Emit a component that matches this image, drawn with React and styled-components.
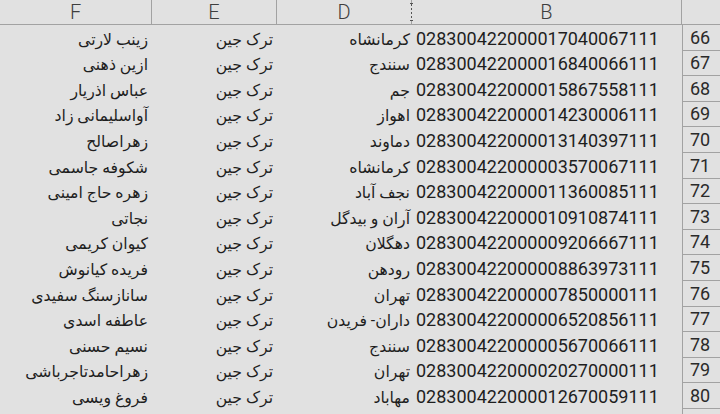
import React from 'react';
import styled, { createGlobalStyle } from 'styled-components';

const GlobalStyle = createGlobalStyle`
  html, body {
    margin: 0;
    padding: 0;
    background: #e1e1e1;
  }
  body {
    width: 720px;
    height: 414px;
    overflow: hidden;
    font-family: 'Roboto', 'DejaVu Sans', sans-serif;
  }
`

const Sheet = styled.div`
  width: 720px;
  height: 414px;
  overflow: hidden;
  background: #e1e1e1;
`
const Grid = styled.div`
  display: grid;
  grid-template-columns: 152px 125px 135px 270px 38px;
`
const HeadCell = styled.div`
  position: relative;
  height: 24px;
  border-bottom: 1px solid #a2a2a2;
  border-right: ${p => (p.$last ? 'none' : '1px solid #a2a2a2')};
  display: flex;
  align-items: center;
  justify-content: center;
  color: #3e3e3e;
  font-size: 20px;
  font-weight: 300;
  box-sizing: content-box;
`
const ResizeMark = styled.span`
  position: absolute;
  right: -2px;
  top: 3px;
  bottom: 3px;
  width: 3px;
  border-top: 1px solid #555;
  border-bottom: 1px solid #555;
  background: repeating-linear-gradient(to bottom, #555 0 2px, transparent 2px 4px) center / 1px 100% no-repeat;
  background-color: #e1e1e1;
`
const Cell = styled.div`
  height: 25.6px;
  box-sizing: border-box;
  display: flex;
  align-items: flex-end;
  justify-content: flex-start;
  padding: 0 ${p => p.$pad || 4}px 2px;
  direction: ${p => (p.$rtl ? 'rtl' : 'ltr')};
  color: #1e1e1e;
  font-size: ${p => (p.$rtl ? '15.7px' : '18px')};
  white-space: nowrap;
  overflow: hidden;
`
const RowNum = styled.div`
  height: 25.6px;
  box-sizing: border-box;
  border-left: 1px solid #a2a2a2;
  border-bottom: 1px solid #a2a2a2;
  display: flex;
  align-items: flex-end;
  padding: 0 0 2px 7px;
  color: #2a2a2a;
  font-size: 18px;
`

const rows = [
  [66, 'زینب لارتی', 'کرمانشاه', '028300422000017040067111'],
  [67, 'ازین ذهنی', 'سنندج', '028300422000016840066111'],
  [68, 'عباس اذریار', 'جم', '028300422000015867558111'],
  [69, 'آواسلیمانی زاد', 'اهواز', '028300422000014230006111'],
  [70, 'زهراصالح', 'دماوند', '028300422000013140397111'],
  [71, 'شکوفه جاسمی', 'کرمانشاه', '028300422000003570067111'],
  [72, 'زهره حاج امینی', 'نجف آباد', '028300422000011360085111'],
  [73, 'نجاتی', 'آران و بیدگل', '028300422000010910874111'],
  [74, 'کیوان کریمی', 'دهگلان', '028300422000009206667111'],
  [75, 'فریده کیانوش', 'رودهن', '028300422000008863973111'],
  [76, 'سانازسنگ سفیدی', 'تهران', '028300422000007850000111'],
  [77, 'عاطفه اسدی', 'داران- فریدن', '028300422000006520856111'],
  [78, 'نسیم حسنی', 'سنندج', '028300422000005670066111'],
  [79, 'زهراحامدتاجرباشی', 'تهران', '028300422000020270000111'],
  [80, 'فروغ ویسی', 'مهاباد', '028300422000012670059111'],
];

const App = () => {
  return (
    <Sheet>
      <GlobalStyle />
      <Grid>
        <HeadCell>F</HeadCell>
        <HeadCell>E</HeadCell>
        <HeadCell>D<ResizeMark /></HeadCell>
        <HeadCell>B</HeadCell>
        <HeadCell $last />
        {rows.map(([n, name, city, code]) => (
          <React.Fragment key={n}>
            <Cell $rtl>{name}</Cell>
            <Cell $rtl>ترک جین</Cell>
            <Cell $rtl $pad={2}>{city}</Cell>
            <Cell>{code}</Cell>
            <RowNum>{n}</RowNum>
          </React.Fragment>
        ))}
        <Cell />
        <Cell />
        <Cell />
        <Cell />
        <RowNum />
      </Grid>
    </Sheet>
  );
}

export default App;
